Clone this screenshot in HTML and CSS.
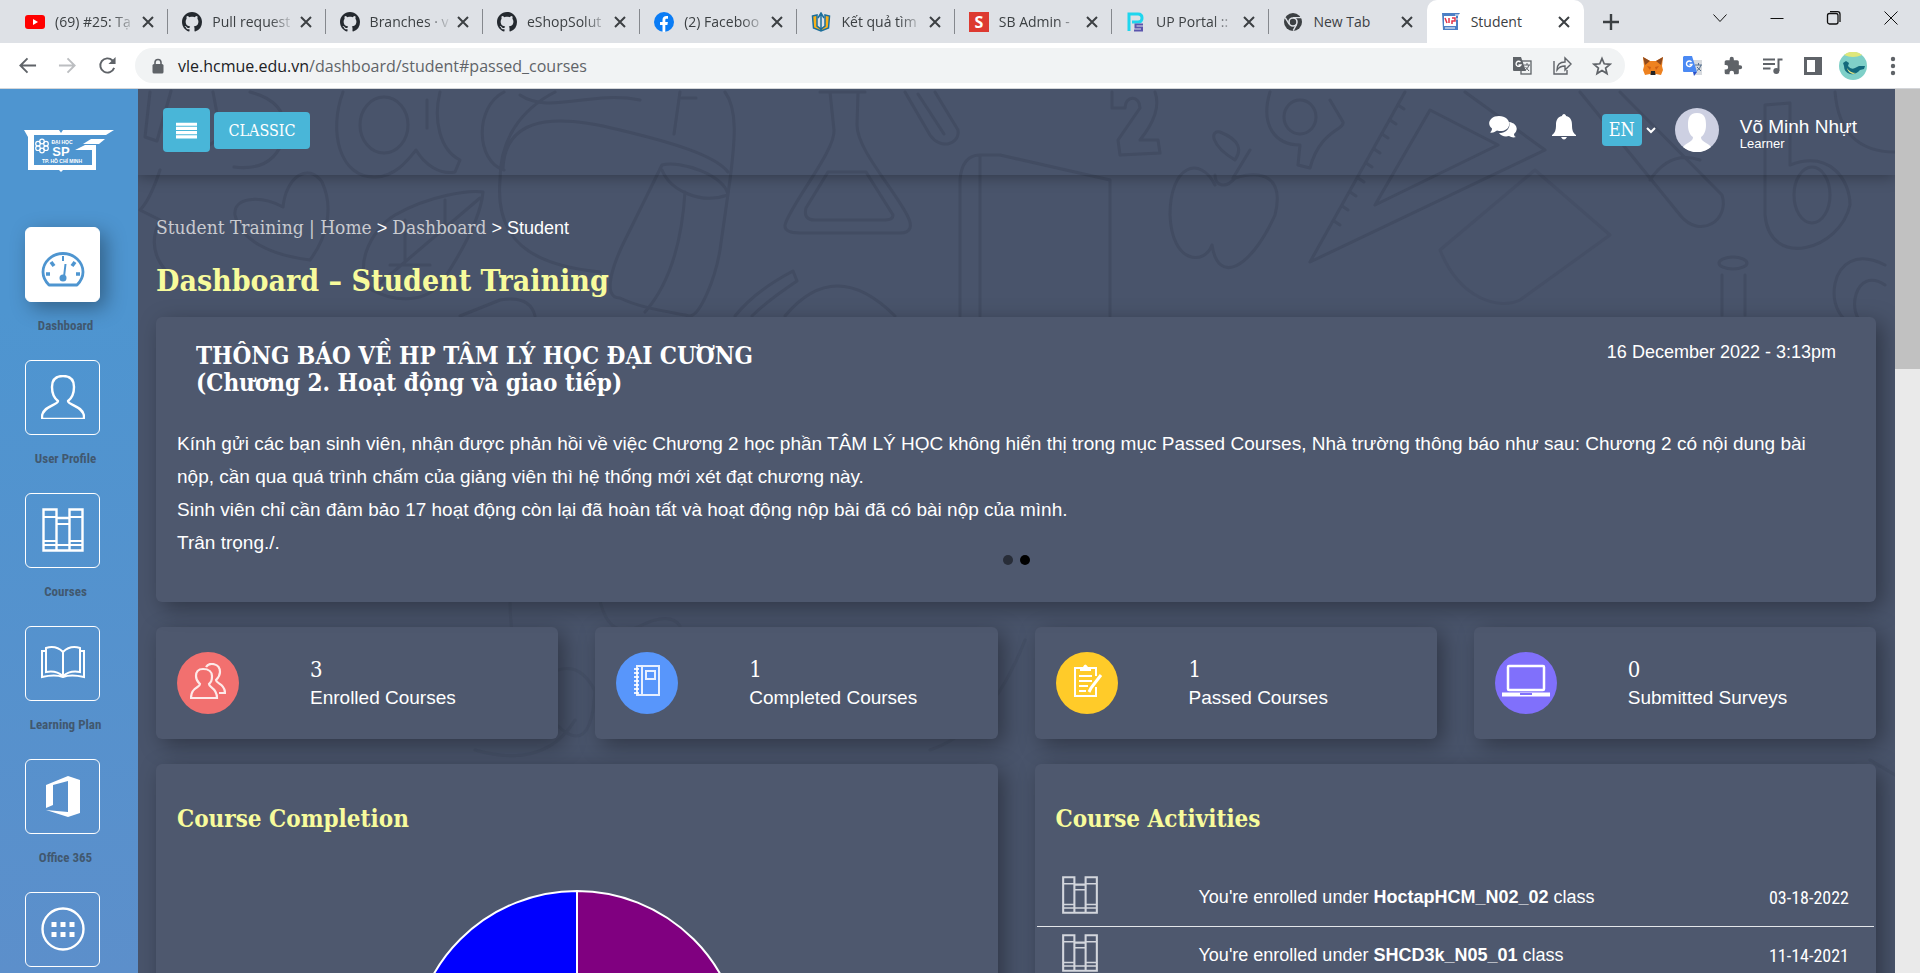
FILE: index.html
```html
<!DOCTYPE html>
<html lang="vi">
<head>
<meta charset="utf-8">
<title>Student</title>
<link rel="stylesheet" href="styles.css">
</head>
<body>
<svg class="defs" width="0" height="0" aria-hidden="true">
  <symbol id="x" viewBox="0 0 16 16"><path d="M3 3l10 10M13 3L3 13" fill="none" stroke="#3c4043" stroke-width="2"/></symbol>
  <symbol id="github" viewBox="0 0 16 16"><path fill="#24292f" d="M8 0C3.58 0 0 3.58 0 8c0 3.54 2.29 6.53 5.47 7.59.4.07.55-.17.55-.38 0-.19-.01-.82-.01-1.49-2.01.37-2.53-.49-2.69-.94-.09-.23-.48-.94-.82-1.13-.28-.15-.68-.52-.01-.53.63-.01 1.08.58 1.23.82.72 1.21 1.87.87 2.33.66.07-.52.28-.87.51-1.07-1.78-.2-3.64-.89-3.64-3.95 0-.87.31-1.59.82-2.15-.08-.2-.36-1.02.08-2.12 0 0 .67-.21 2.2.82.64-.18 1.32-.27 2-.27s1.36.09 2 .27c1.53-1.04 2.2-.82 2.2-.82.44 1.1.16 1.92.08 2.12.51.56.82 1.27.82 2.15 0 3.07-1.87 3.75-3.65 3.95.29.25.54.73.54 1.48 0 1.07-.01 1.93-.01 2.2 0 .21.15.46.55.38A8.01 8.01 0 0 0 16 8c0-4.42-3.58-8-8-8z"/></symbol>
  <symbol id="books" viewBox="0 0 42 44"><g fill="none" stroke="currentColor" stroke-width="2.4"><path d="M1.500 1.500h13v41h-13zM14.500 10h13v32.500h-13zM27.500 1.500h13v41h-13z"/><path d="M2 9h12M2 33h12M2 37h12M28 9h12M28 33h12M28 37h12M14 16h14M14 37h14" stroke-width="1.8"/></g></symbol>
</svg>

<header class="browser">
  <div class="tabstrip">
    <div class="tabs">
      <div class="tab"><svg class="fav" viewBox="0 0 20 20"><rect y="3" width="20" height="14" rx="3" fill="#f00"/><path d="M8 7l5 3-5 3z" fill="#fff"/></svg><button class="tab-title">(69) #25: Tạ</button><button class="tab-close" aria-label="Close tab"><svg><use href="#x"/></svg></button></div>
      <div class="tab"><svg class="fav"><use href="#github"/></svg><button class="tab-title">Pull request</button><button class="tab-close" aria-label="Close tab"><svg><use href="#x"/></svg></button></div>
      <div class="tab"><svg class="fav"><use href="#github"/></svg><button class="tab-title">Branches · v</button><button class="tab-close" aria-label="Close tab"><svg><use href="#x"/></svg></button></div>
      <div class="tab"><svg class="fav"><use href="#github"/></svg><button class="tab-title">eShopSolut</button><button class="tab-close" aria-label="Close tab"><svg><use href="#x"/></svg></button></div>
      <div class="tab"><svg class="fav" viewBox="0 0 20 20"><circle cx="10" cy="10" r="10" fill="#0a7cf5"/><path d="M8.500 20v-7H6v-3h2.500V8c0-2.500 1.500-4 4-4h1.500v2.800h-1.300c-1 0-1.400.5-1.400 1.400V10h2.600l-.5 3h-2.100v7z" fill="#fff"/></svg><button class="tab-title">(2) Faceboo</button><button class="tab-close" aria-label="Close tab"><svg><use href="#x"/></svg></button></div>
      <div class="tab"><svg class="fav" viewBox="0 0 20 20"><path d="M1.500 4l4.500-1v11l4 3 4-3V3l4.500 1-1 12-7.500 3-7.500-3z" fill="#fbb117" stroke="#1c6f9c" stroke-width="1.500"/><path d="M10 1v18M7 6l3-5 3 5" fill="none" stroke="#1c6f9c" stroke-width="1.500"/></svg><button class="tab-title">Kết quả tìm</button><button class="tab-close" aria-label="Close tab"><svg><use href="#x"/></svg></button></div>
      <div class="tab"><span class="fav fav-s">S</span><button class="tab-title">SB Admin -</button><button class="tab-close" aria-label="Close tab"><svg><use href="#x"/></svg></button></div>
      <div class="tab"><svg class="fav" viewBox="0 0 20 20"><path d="M3 19V2h9q4 0 4 4t-4 4H6" fill="none" stroke="#1fd6ee" stroke-width="3"/><path d="M17 12.500H9.500v3H16v3H8" fill="none" stroke="#5b55ad" stroke-width="2"/></svg><button class="tab-title">UP Portal ::</button><button class="tab-close" aria-label="Close tab"><svg><use href="#x"/></svg></button></div>
      <div class="tab"><svg class="fav" viewBox="0 0 20 20"><circle cx="10" cy="10" r="9" fill="#3c4043"/><circle cx="10" cy="10" r="4" fill="#3c4043" stroke="#dee1e6" stroke-width="1.600"/><path d="M10 5.600h8M6.200 12.200l-4-6.500M13.700 12.200l-3.500 6.500" stroke="#dee1e6" stroke-width="1.400"/></svg><button class="tab-title">New Tab</button><button class="tab-close" aria-label="Close tab"><svg><use href="#x"/></svg></button></div>
      <div class="tab active"><svg class="fav" viewBox="0 0 20 20"><path d="M1 1h18l-2 3v14H2z" fill="#4c7fc4"/><path d="M3 4h12v10H3z" fill="#fff"/><path d="M4 6l2 5M8 6v5M11 6h3v3h-3v3" stroke="#e2344a" stroke-width="1.500" fill="none"/><path d="M4 16h10M14 3h5M15 7h4" stroke="#fff"/></svg><button class="tab-title">Student</button><button class="tab-close" aria-label="Close tab"><svg><use href="#x"/></svg></button></div>
    </div>
    <div class="window">
      <button class="new-tab" aria-label="New tab"><svg viewBox="0 0 16 16"><path d="M8 0v16M0 8h16" stroke="#3c4043" stroke-width="2.400"/></svg></button>
      <div class="controls">
        <button aria-label="Search tabs"><svg viewBox="0 0 16 16"><path d="M1.500 4.500L8 11.500l6.500-7" fill="none" stroke="#111"/></svg></button>
        <button aria-label="Minimize"><svg viewBox="0 0 16 16"><path d="M1.500 8.500h13" stroke="#111"/></svg></button>
        <button aria-label="Restore"><svg viewBox="0 0 16 16"><rect x="1.500" y="3.500" width="10.500" height="10.500" rx="2" fill="none" stroke="#111" stroke-width="1.300"/><path d="M4 1.700h7.500q2.500 0 2.500 2.500V12" fill="none" stroke="#111" stroke-width="1.300"/></svg></button>
        <button aria-label="Close"><svg viewBox="0 0 16 16"><path d="M1.500 1.500l13 13M14.500 1.500l-13 13" stroke="#111"/></svg></button>
      </div>
    </div>
  </div>
  <div class="toolbar">
    <div class="nav-buttons">
      <button aria-label="Back"><svg viewBox="0 0 20 20"><path d="M19 10H3M10 2.500L2.500 10l7.500 7.500" fill="none" stroke="#5f6368" stroke-width="2"/></svg></button>
      <button aria-label="Forward"><svg viewBox="0 0 20 20"><path d="M1 10h16M10 2.500l7.500 7.500-7.500 7.500" fill="none" stroke="#bcbec1" stroke-width="2"/></svg></button>
      <button aria-label="Reload"><svg viewBox="0 0 20 20"><path d="M17 12.500A7.500 7.500 0 1 1 15.300 4.700L17 6.500" fill="none" stroke="#5f6368" stroke-width="2"/><path d="M18.500 1v7.500H11z" fill="#5f6368"/></svg></button>
    </div>
    <div class="address">
      <svg class="lock" viewBox="0 0 12 16"><rect x="0.500" y="6" width="11" height="9.500" rx="1.500" fill="#5f6368"/><path d="M3 7V4.500a3 3 0 0 1 6 0V7" fill="none" stroke="#5f6368" stroke-width="1.600"/></svg>
      <a class="url" href="#passed_courses"><span>vle.hcmue.edu.vn</span>/dashboard/student#passed_courses</a>
      <button aria-label="Translate page"><svg viewBox="0 0 20 20"><rect x="9" y="5" width="10" height="13" fill="none" stroke="#5f6368" stroke-width="1.300"/><path d="M1 1h8l5 14H2q-1 0-1-1z" fill="#5f6368"/><path d="M8.500 6A2.600 2.600 0 1 0 9 9H6.500" fill="none" stroke="#fff" stroke-width="1.300"/><path d="M12 9h6M15 7v2M17 9q-1 4-4 5M13.500 11l3.500 4" fill="none" stroke="#5f6368"/></svg></button>
      <button aria-label="Share"><svg viewBox="0 0 20 20"><path d="M2 5v13h13v-4M5 14c0-6 3-8 8-8V2l6 6-6 6v-4c-4 0-6 1-8 4z" fill="none" stroke="#5f6368" stroke-width="1.400"/></svg></button>
      <button aria-label="Bookmark"><svg viewBox="0 0 20 20"><path d="M10 2.500l2.200 5.300 5.800.5-4.400 3.700 1.400 5.600-5-3-5 3 1.400-5.600L2 8.300l5.800-.5z" fill="none" stroke="#5f6368" stroke-width="1.700"/></svg></button>
    </div>
    <div class="extensions">
      <button aria-label="MetaMask"><svg viewBox="0 0 20 20"><path d="M0 1l7 4h6l7-4-1 9 1 4-2 5-5-1-2 1H9l-2-1-5 1-2-5 1-4z" fill="#ee8220"/><path d="M0 1l7 4-5 4zM20 1l-7 4 5 4z" fill="#8f4a1d"/><path d="M4 10l4 1-1 3zM16 10l-4 1 1 3z" fill="#cf5f13"/><path d="M8 15h4l.5 4h-5z" fill="#252525"/></svg></button>
      <button aria-label="Google Translate"><svg viewBox="0 0 20 20"><path d="M8 4h11v15h-7z" fill="#d7dade"/><path d="M1 0h8l5 16H1q-1 0-1-1V1z" fill="#4a89f3"/><path d="M10 16h4l-3 4z" fill="#2a50c8"/><path d="M8.500 6A2.800 2.800 0 1 0 9 8.500H6.500" fill="none" stroke="#fff" stroke-width="1.400"/><path d="M12 9h7M15.500 7v2M18 9q-1 4-4 5.500M14 11l4 4" fill="none" stroke="#56708f"/></svg></button>
      <button aria-label="Extensions"><svg viewBox="0 0 24 24"><path fill="#5f6368" d="M20.500 11H19V7a2 2 0 0 0-2-2h-4V3.500a2.500 2.500 0 0 0-5 0V5H4a2 2 0 0 0-2 2v3.800h1.500a2.700 2.700 0 0 1 0 5.400H2V20a2 2 0 0 0 2 2h3.800v-1.500a2.700 2.700 0 0 1 5.400 0V22H17a2 2 0 0 0 2-2v-4h1.500a2.500 2.500 0 0 0 0-5z"/></svg></button>
      <button aria-label="Media"><svg viewBox="0 0 20 20"><path d="M0 3.500h12M0 8h12M0 12.500h7.500" stroke="#5f6368" stroke-width="2"/><path d="M19.500 3.500H15.500V15" fill="none" stroke="#5f6368" stroke-width="2"/><circle cx="13.300" cy="15" r="3" fill="#5f6368"/></svg></button>
      <button aria-label="Side panel"><svg viewBox="0 0 20 20"><path d="M1 1h18v18H1zM4 4v12h8V4z" fill="#5f6368" fill-rule="evenodd"/></svg></button>
      <button class="profile" aria-label="Profile"><svg viewBox="0 0 28 28"><circle cx="14" cy="14" r="14" fill="#7fd0c8"/><path d="M5 3a14 14 0 0 1 18 0q-9 4-18 0z" fill="#dfe77a"/><path d="M4 11l3-2 3 2-1 3q3 4 7 2l4-2 6 0-1 3-4 1q-4 5-10 4-6-2-6-8z" fill="#12697c"/><path d="M8 16q3 5 9 5l-3 1q-5-1-6-6z" fill="#e8ea85"/></svg></button>
      <button aria-label="Menu"><svg viewBox="0 0 20 20"><g fill="#5f6368"><circle cx="10" cy="3" r="2.200"/><circle cx="10" cy="10" r="2.200"/><circle cx="10" cy="17" r="2.200"/></g></svg></button>
    </div>
  </div>
</header>

<div class="app">
  <nav class="sidebar">
    <a class="logo" href="#home" aria-label="HCMUE">
      <svg viewBox="0 0 90 42"><g fill="#fff"><path d="M0 0h35l2 3 2-3h51l-8 5H10v30h58V20H51l10-5h11v25H39l-2 2-2-2H4V7z"/><path d="M67 9h14l-6 5H59z"/></g><g fill="none" stroke="#fff" stroke-width="1.200"><circle cx="18" cy="11.500" r="2.300"/><circle cx="22" cy="13.700" r="2.300"/><circle cx="22" cy="18.200" r="2.300"/><circle cx="18" cy="20.500" r="2.300"/><circle cx="14" cy="18.200" r="2.300"/><circle cx="14" cy="13.700" r="2.300"/></g><g fill="#fff" font-family="Liberation Sans" font-weight="700" text-anchor="middle"><text x="38" y="14" font-size="5">ĐẠI HỌC</text><text x="37" y="26" font-size="13">SP</text><text x="38" y="33" font-size="5">TP. HỒ CHÍ MINH</text></g></svg>
    </a>
    <a class="side-item current" href="#dashboard"><span class="side-box"><svg viewBox="0 0 44 44"><path d="M8 39Q2 33 2 26a20 18.500 0 0 1 40 0q0 7-6 13z" fill="none" stroke="#4e95d0" stroke-width="2.800" stroke-linejoin="round"/><path d="M22 10v5M24.500 18l-1.500 13" stroke="#4e95d0" stroke-width="2"/><circle cx="22" cy="32" r="3.500" fill="#4e95d0"/><path d="M5 28h4M35 28h4M10 16l3 4M34 16l-3 4" stroke="#4e95d0" stroke-width="3.600"/></svg></span><span class="side-label">Dashboard</span></a>
    <a class="side-item" href="#profile"><span class="side-box"><svg viewBox="0 0 44 44"><path d="M22 1c-8 0-11 5-11 11 0 7 2 11 6 14 0 4-15 5-16 15v3h42v-3c-1-10-16-11-16-15 4-3 6-7 6-14 0-6-3-11-11-11z" fill="none" stroke="#fff" stroke-width="2.400" stroke-linejoin="round"/></svg></span><span class="side-label">User Profile</span></a>
    <a class="side-item" href="#courses"><span class="side-box"><svg><use href="#books"/></svg></span><span class="side-label">Courses</span></a>
    <a class="side-item" href="#plan"><span class="side-box"><svg viewBox="0 0 44 44"><path d="M22 11Q15 4 5 7v24q10-2 17 4 7-6 17-4V7q-10-3-17 4zv24M5 10H1v26q13-3 21 0 8-3 21 0V10h-4" fill="none" stroke="#fff" stroke-width="2"/></svg></span><span class="side-label">Learning Plan</span></a>
    <a class="side-item" href="#office"><span class="side-box"><svg viewBox="0 0 44 44"><path d="M5 34V11L27 2l12 4v33l-12 4L5 36l22 2V7L12 11v20z" fill="#fff"/></svg></span><span class="side-label">Office 365</span></a>
    <a class="side-item" href="#more"><span class="side-box"><svg viewBox="0 0 44 44"><circle cx="22" cy="22" r="20.500" fill="none" stroke="#fff" stroke-width="2.400"/><path d="M10.500 15h5v5h-5zM19.500 15h5v5h-5zM28.500 15h5v5h-5zM10.500 25h5v5h-5zM19.500 25h5v5h-5zM28.500 25h5v5h-5z" fill="#fff"/></svg></span></a>
  </nav>

  <div class="main">
    <svg class="doodles" viewBox="138 89 1757 884" preserveAspectRatio="xMidYMin slice" aria-hidden="true">
      <g fill="none" stroke="#424c62" stroke-width="3" stroke-linejoin="round" stroke-linecap="round">
        <path d="M150 92l-5 45 12 4 14-50M176 150q28 5 45-15l-8-43M250 92q40 10 34 45-10 35-50 30M160 170q-10 30-20 40l20 10q-20 40 30 70"/>
        <path d="M283 207c-23-12-50-10-48 8 5 25 35 40 75 45 15-20 25-50 12-78-14-20-36-5-39 25"/>
        <ellipse cx="384" cy="125" rx="24" ry="28"/><path d="M343 92c-15 40-3 86 32 85 20 0 33-17 41-27 9 15 24 25 39 22l5-12c-20-10-27-40-20-68M427 100v28"/>
        <path d="M504 92c-30 15-28 70 0 78M555 92c-35 18-55 48-55 88-5 60 30 85 100 92M503 168c3-60 70-50 117-38 50 12 95 25 108 42M520 95c30 20 70-5 120 5M680 92l-6 42M682 98h14"/>
        <path d="M725 92c13 18 10 48 5 88l-10 70c-5 30-20 65-30 66-20-4-50-8-70-18-20 0-5-38 5-58l37-75c18-5 63 10 66 30-28 10-58-5-66-25M685 192q-5 80-40 120"/>
        <path d="M820 92h45M830 92l4 38c2 20-44 75-49 95-1 8 10 8 20 8h95c12 0 12-8 8-16-13-27-51-67-51-92l1-33M828 172h38l27 43q0 5-8 5h-70q-12 0-9-12z"/>
        <path d="M905 92l25 43c10 15 30 10 28-5l-23-38M918 94l26 40"/>
        <path d="M960 316V180q2-25 20-25h20l110 25v136M980 155v161"/>
        <path d="M372 290c-20-20-2-60 23-75 35-20 75-25 88-23-3 33-33 78-43 93-20 20-50 15-68 5l108-92M405 220v40M445 200v30M390 265h40"/>
        <path d="M735 316q20-25 58-45l4 10q-30 20-45 35M785 316q50-60 110 0M460 316l40-16q30-5 35 16"/>
        <path d="M1112 92v16h13c0-13 15-13 15 0l-22 32 2 15 40-2-2-13h-18c20-25 18-40 15-48"/>
        <ellipse cx="1300" cy="117" rx="16" ry="17"/><path d="M1270 92c-10 33 5 53 30 53l-2 20 12 3c10-38 35-38 33-46l-13-22"/>
        <path d="M1215 185c-15-30-45-20-45 30 2 50 35 50 42 30 6 40 38 25 63-30 10-40-15-45-40-37-10 12-20 7-20-3M1233 178l17-28M1235 160c-25-15-25-30-15-28 20 8 22 18 15 28"/>
        <path d="M1405 92l-95 170 235-112-80-58M1430 110l-55 95 123-60z"/>
        <path d="M1398 105l6 4M1390 120l6 4M1382 134l6 4M1374 149l6 4M1366 163l6 4M1358 178l6 4M1350 192l6 4M1342 206l6 4M1334 221l6 4"/>
        <path d="M1580 92l100 123c20 25 50 5 42-20L1620 92M1650 180q20-30 50-20"/>
        <path d="M1765 105l25-2v62c40-15 60 15 60 40-10 45-80 65-85 10z"/><ellipse cx="1812" cy="195" rx="18" ry="28"/>
        <path d="M1535 170l-95 80c20 50 60 60 80 50l90-65-75-65" stroke-opacity=".6"/>
        <path d="M1835 92q5 60 60 60M1885 265c-60-30-65 60-25 60M1885 285c-30-20-40 30-20 40"/>
        <ellipse cx="1733" cy="263" rx="14" ry="6"/><path d="M1722 275v40M1745 275v40"/>
        <path d="M510 601q0 50 20 90 60 90 65 0-15-30-40-20M600 601q10 40 40 25t40 0M475 750q70 20 100-30M930 750q60-20 95-110M1870 760l25 15" stroke-opacity=".5"/>
      </g>
    </svg>

    <header class="topbar">
      <button class="btn menu" aria-label="Toggle menu"><svg viewBox="0 0 20 16"><path d="M0 2h20M0 6h20M0 10h20M0 14h20" stroke="#fff" stroke-width="3"/></svg></button>
      <button class="btn classic">CLASSIC</button>
      <div class="user-tools">
        <button class="tool" aria-label="Messages"><svg class="chat" viewBox="0 0 28 22"><path d="M20 6c8 1 10 8 5 12 0 2 1 3 2 3-3 1-5 0-7-1-4 1-8 0-10-3 7 0 12-5 10-11z" fill="#fff"/><path d="M10 0c12 0 14 13 3 15-2 0-4 0-5-.5C6 16 4 17 1 16.500c1-1 2-2 2-4C-3 8 1 0 10 0z" fill="#fff"/></svg></button>
        <button class="tool" aria-label="Notifications"><svg class="bell" viewBox="0 0 24 26"><path d="M12 0c1 0 2 1 2 2 5 1 6 5 6 9 0 5 1 8 4 10v1H0v-1c3-2 4-5 4-10 0-4 1-8 6-9 0-1 1-2 2-2zM9 23h6q-3 5-6 0z" fill="#fff"/></svg></button>
        <button class="lang"><span>EN</span><svg viewBox="0 0 10 8"><path d="M1 2l4 4 4-4" fill="none" stroke="#fff" stroke-width="2"/></svg></button>
        <a class="user" href="#profile">
          <svg viewBox="0 0 44 44"><circle cx="22" cy="22" r="22" fill="#cdd0e2"/><path d="M22 5c-8 0-9 6-9 12s2 10 5 12c0 5-6 5-10 10 8 7 20 7 28 0-4-5-10-5-10-10 3-2 5-6 5-12S30 5 22 5z" fill="#fff"/></svg>
          <span class="user-text"><span class="user-name">Võ Minh Nhựt</span><span class="user-role">Learner</span></span>
        </a>
      </div>
    </header>

    <main class="content">
      <nav class="breadcrumb"><a href="#home">Student Training | Home</a> &gt; <a href="#dashboard">Dashboard</a> &gt; <span>Student</span></nav>
      <h1>Dashboard – Student Training</h1>

      <section class="card notice">
        <div class="notice-head">
          <h2>THÔNG BÁO VỀ HP TÂM LÝ HỌC ĐẠI CƯƠNG<br>(Chương 2. Hoạt động và giao tiếp)</h2>
          <time>16 December 2022 - 3:13pm</time>
        </div>
        <p>Kính gửi các bạn sinh viên, nhận được phản hồi về việc Chương 2 học phần TÂM LÝ HỌC không hiển thị trong mục Passed Courses, Nhà trường thông báo như sau: Chương 2 có nội dung bài nộp, cần qua quá trình chấm của giảng viên thì hệ thống mới xét đạt chương này.<br>Sinh viên chỉ cần đảm bảo 17 hoạt động còn lại đã hoàn tất và hoạt động nộp bài đã có bài nộp của mình.<br>Trân trọng./.</p>
        <div class="dots"><button aria-label="Slide 1"></button><button class="on" aria-label="Slide 2"></button></div>
      </section>

      <div class="stats">
        <section class="card stat"><span class="disc red"><svg viewBox="0 0 36 36"><g fill="none" stroke="#fff" stroke-opacity=".85" stroke-width="2.200"><path d="M13 6c-5 0-7 3-7 7 0 5 2 6 4 8 0 4-9 3-9 14h26c0-11-8-10-8-14 2-2 3-3 3-8 0-4-3-7-9-7z"/><path d="M16 4c3-5 14-4 14 5 0 4-2 6-4 8 0 4 9 3 9 13h-6"/></g></svg></span><div><strong>3</strong><span>Enrolled Courses</span></div></section>
        <section class="card stat"><span class="disc blue"><svg viewBox="0 0 36 36"><g fill="none" stroke="#fff" stroke-opacity=".85" stroke-width="2"><path d="M8 3h22v29H8zM13 3v29M17 8h9v8h-9z"/><path d="M5 6h5M5 10h5M5 14h5M5 18h5M5 22h5M5 26h5M5 30h5"/></g></svg></span><div><strong>1</strong><span>Completed Courses</span></div></section>
        <section class="card stat"><span class="disc yellow"><svg viewBox="0 0 36 36"><g fill="none" stroke="#fff" stroke-width="2"><path d="M12 5H6v28h21V24M21 5h6v8M10 13h13M10 18h13M10 23h9M10 28h7"/><path d="M32 12L22 25l-2 4" stroke-width="3"/></g><path d="M11 8V4h3q2-5 5 0h3v4z" fill="#fff"/></svg></span><div><strong>1</strong><span>Passed Courses</span></div></section>
        <section class="card stat"><span class="disc violet"><svg class="wide" viewBox="0 0 48 36"><g fill="none" stroke="#fff"><rect x="6" y="3" width="36" height="24" rx="1" stroke-width="2.500"/><path d="M0 31.500h48" stroke-width="4"/></g><path d="M18 30h12v2H18z" fill="#8070fb"/></svg></span><div><strong>0</strong><span>Submitted Surveys</span></div></section>
      </div>

      <div class="panels">
        <section class="card panel">
          <h3>Course Completion</h3>
          <svg class="pie" viewBox="0 0 334 334" role="img" aria-label="Course completion chart"><path d="M167 167V2a165 165 0 0 0 0 330z" fill="#00f" stroke="#fff" stroke-width="2"/><path d="M167 167V2a165 165 0 0 1 0 330z" fill="#800080" stroke="#fff" stroke-width="2"/></svg>
        </section>
        <section class="card panel">
          <h3>Course Activities</h3>
          <ul class="activities">
            <li><svg><use href="#books"/></svg><span>You're enrolled under <b>HoctapHCM_N02_02</b> class</span><time>03-18-2022</time></li>
            <li><svg><use href="#books"/></svg><span>You're enrolled under <b>SHCD3k_N05_01</b> class</span><time>11-14-2021</time></li>
          </ul>
        </section>
      </div>
    </main>
  </div>
  <div class="scrollbar"><div class="thumb"></div></div>
</div>
</body>
</html>
```
FILE: styles.css
```css
* { box-sizing: border-box; }

body {
  margin: 0;
  height: 100vh;
  overflow: hidden;
  display: flex;
  flex-direction: column;
  font-family: "Liberation Sans", Arial, sans-serif;
  color: #fff;
}

button {
  border: 0;
  padding: 0;
  background: none;
  color: inherit;
  font: inherit;
  display: flex;
  align-items: center;
  justify-content: center;
}

a { color: inherit; text-decoration: none; }
h1, h2, h3, p, ul { margin: 0; padding: 0; }
.defs { position: absolute; }

/* Browser frame */
.browser {
  flex: none;
  background: #fff;
  border-bottom: 1px solid #d4d6d9;
  color: #3c4043;
  font-family: "Open Sans", "Noto Sans", sans-serif;
}

.tabstrip { display: flex; height: 43px; padding-left: 11px; background: #dee1e6; }
.tabs { display: flex; flex: 1; min-width: 0; }

.tab {
  position: relative;
  flex: 1;
  min-width: 0;
  display: flex;
  align-items: center;
  padding: 0 12px 0 14px;
}

.tab:not(.active)::after {
  content: "";
  position: absolute;
  right: 0;
  top: 9px;
  width: 1px;
  height: 25px;
  background: #85888d;
}

.tab:nth-last-child(2)::after { display: none; }
.tab.active { background: #fff; border-radius: 10px 10px 0 0; }
.fav { flex: none; width: 20px; height: 20px; margin-right: 10px; }

.fav-s {
  background: #dd3a31;
  color: #fff;
  font: 700 16px/20px "Open Sans", sans-serif;
  text-align: center;
}

.tab-title {
  flex: 1;
  min-width: 0;
  justify-content: flex-start;
  white-space: nowrap;
  font-size: 14px;
  line-height: 24px;
  mask-image: linear-gradient(90deg, #000 70%, transparent);
}

.tab.active .tab-title, .tab:nth-child(9) .tab-title { mask-image: none; }
.tab-close { margin-left: 3px; }
.tab-close svg { width: 16px; height: 16px; }
.window { flex: none; width: 336px; display: flex; padding-left: 19px; }
.new-tab svg { width: 16px; height: 16px; }
.controls { flex: 1; display: flex; height: 36px; padding-left: 72px; }
.controls button { width: 57px; }
.controls svg { width: 16px; height: 16px; }

.toolbar { display: flex; align-items: center; height: 45px; }
.nav-buttons { display: flex; padding-left: 7px; width: 135px; }
.nav-buttons button { width: 40px; }
.nav-buttons svg { width: 19px; height: 19px; }

.address {
  flex: 1;
  display: flex;
  align-items: center;
  height: 35px;
  padding: 0 3px 0 17px;
  border-radius: 18px;
  background: #f1f3f4;
}

.lock { width: 12px; height: 16px; margin-right: 14px; }
.url { flex: 1; font-size: 16px; color: #5f6368; }
.url span { color: #202124; }
.address button, .extensions button { width: 40px; }
.address svg, .extensions svg { height: 20px; }
.extensions { display: flex; padding: 0 7px 0 8px; }
.extensions .profile svg { width: 28px; height: 28px; }

/* Page frame */
.app { flex: 1; min-height: 0; display: flex; overflow: hidden; }

.sidebar {
  flex: none;
  width: 138px;
  padding-top: 41px;
  overflow: hidden;
  background: linear-gradient(#4e95d0 25%, #5c8fcb);
}

.logo { display: block; margin: 0 0 55px 24px; }
.logo svg { display: block; width: 90px; height: 42px; }
.side-item { display: block; margin-bottom: 24px; }

.side-box {
  display: flex;
  align-items: center;
  justify-content: center;
  width: 75px;
  height: 75px;
  margin-left: 25px;
  border: 1px solid #fff;
  border-radius: 6px;
}

.side-box svg { width: 44px; height: 44px; margin-bottom: 2px; }
.current .side-box { background: #fff; box-shadow: 6px 6px 20px rgba(0, 0, 0, .35); }
.current .side-box svg { margin-bottom: 0; margin-top: 6px; }

.side-label {
  display: block;
  width: 131px;
  margin-top: 14px;
  text-align: center;
  color: #41586f;
  font: 700 13px/20px "Liberation Sans Narrow", "Roboto Condensed", "Open Sans Condensed", "Roboto", sans-serif;
}

.main {
  position: relative;
  flex: 1;
  min-width: 0;
  overflow: hidden;
  background: #49546b;
}

.doodles { position: absolute; inset: 0; width: 100%; height: 100%; }
.topbar, .content { position: relative; }

.topbar {
  display: flex;
  align-items: flex-start;
  height: 86px;
  padding: 19px 38px 0 25px;
  box-shadow: 0 1px 14px rgba(0, 0, 0, .35);
}

.btn { border-radius: 4px; background: #49b6d8; }
.menu { width: 47px; height: 44px; margin-right: 4px; }
.menu svg { width: 21px; height: 17px; }

.classic {
  width: 96px;
  height: 37px;
  margin-top: 4px;
  font: 16px "DejaVu Serif Condensed", "DejaVu Serif", serif;
}

.user-tools { margin-left: auto; display: flex; align-items: center; height: 44px; }
.tool { width: 61px; height: 44px; }
.chat { width: 28px; height: 22px; margin-bottom: 6px; }
.bell { width: 24px; height: 26px; margin-bottom: 6px; }
.lang { margin-left: 7px; width: 54px; justify-content: space-between; }

.lang span {
  width: 40px;
  height: 32px;
  border-radius: 4px;
  background: #49b6d8;
  text-align: center;
  font: 18px/32px "DejaVu Serif Condensed", "DejaVu Serif", serif;
}

.lang svg { width: 10px; height: 8px; }
.user { display: flex; align-items: center; margin-left: 19px; }
.user svg { width: 44px; height: 44px; margin-right: 21px; }
.user-text { display: flex; flex-direction: column; padding-top: 8px; }
.user-name { font-size: 19px; line-height: 20px; }
.user-role { font-size: 13px; line-height: 14px; }

.content { padding: 38px 19px 0 18px; }

.breadcrumb { font-size: 18px; line-height: 28px; }
.breadcrumb a { color: #c9cbd0; font-family: "DejaVu Serif Condensed", "DejaVu Serif", serif; font-size: 19px; }

h1, h2, h3 { font-family: "DejaVu Serif Condensed", "DejaVu Serif", serif; font-weight: 700; }
h1, h3 { color: #f7fb9c; }
h1 { margin-top: 19px; font-size: 30px; line-height: 40px; }

.card {
  background: #4e586e;
  border-radius: 6px;
  box-shadow: 6px 6px 22px rgba(0, 0, 0, .35);
}

.notice { margin-top: 16px; height: 285px; padding: 22px 40px 0 21px; position: relative; }
.notice-head { display: flex; justify-content: space-between; padding-left: 19px; }
h2 { font-size: 24px; line-height: 27px; padding-top: 3px; }
.notice time { font-size: 18px; line-height: 26px; }
.notice p { margin-top: 31px; font-size: 19px; line-height: 33px; }

.dots {
  position: absolute;
  left: 0;
  right: 0;
  bottom: 37px;
  display: flex;
  justify-content: center;
  gap: 7px;
}

.dots button { width: 10px; height: 10px; border-radius: 50%; background: #282d38; }
.dots .on { background: #000; }

.stats { display: grid; grid-template-columns: repeat(4, 1fr); gap: 37px; margin-top: 25px; }
.stat { display: flex; align-items: center; height: 112px; padding-left: 21px; }

.disc {
  display: flex;
  align-items: center;
  justify-content: center;
  width: 62px;
  height: 62px;
  margin-right: 71px;
  border-radius: 50%;
}

.disc svg { width: 36px; height: 36px; margin-bottom: 4px; }
.disc .wide { width: 48px; }
.red { background: #f2706f; }
.blue { background: #5896fb; }
.yellow { background: #ffcb29; }
.violet { background: #8070fb; }
.stat div { display: flex; flex-direction: column; padding-top: 2px; }
.stat strong { font: 22px/28px "DejaVu Serif Condensed", "DejaVu Serif", serif; }
.stat div span { font-size: 19px; line-height: 28px; }

.panels { display: grid; grid-template-columns: 1fr 1fr; gap: 37px; margin-top: 25px; }
.panel { height: 520px; padding-top: 37px; }
h3 { margin-left: 21px; font-size: 24px; line-height: 36px; }
.pie { display: block; width: 334px; height: 334px; margin: 52px auto 0; }

.activities { list-style: none; margin: 32px 2px 0; }

.activities li {
  display: grid;
  grid-template-columns: 162px 1fr auto;
  align-items: center;
  height: 58px;
  padding-right: 25px;
  border-bottom: 1px solid #e4e6ea;
}

.activities svg { width: 38px; height: 38px; margin: 0 0 6px 24px; color: #d3d6dd; }
.activities span { font-size: 18px; }
.activities time { font: 18px "Liberation Sans Narrow", "Roboto Condensed", "Roboto", sans-serif; }

.scrollbar { flex: none; width: 25px; background: #eaeaea; }
.thumb { height: 280px; max-height: 100%; background: #c1c1c1; }
```
